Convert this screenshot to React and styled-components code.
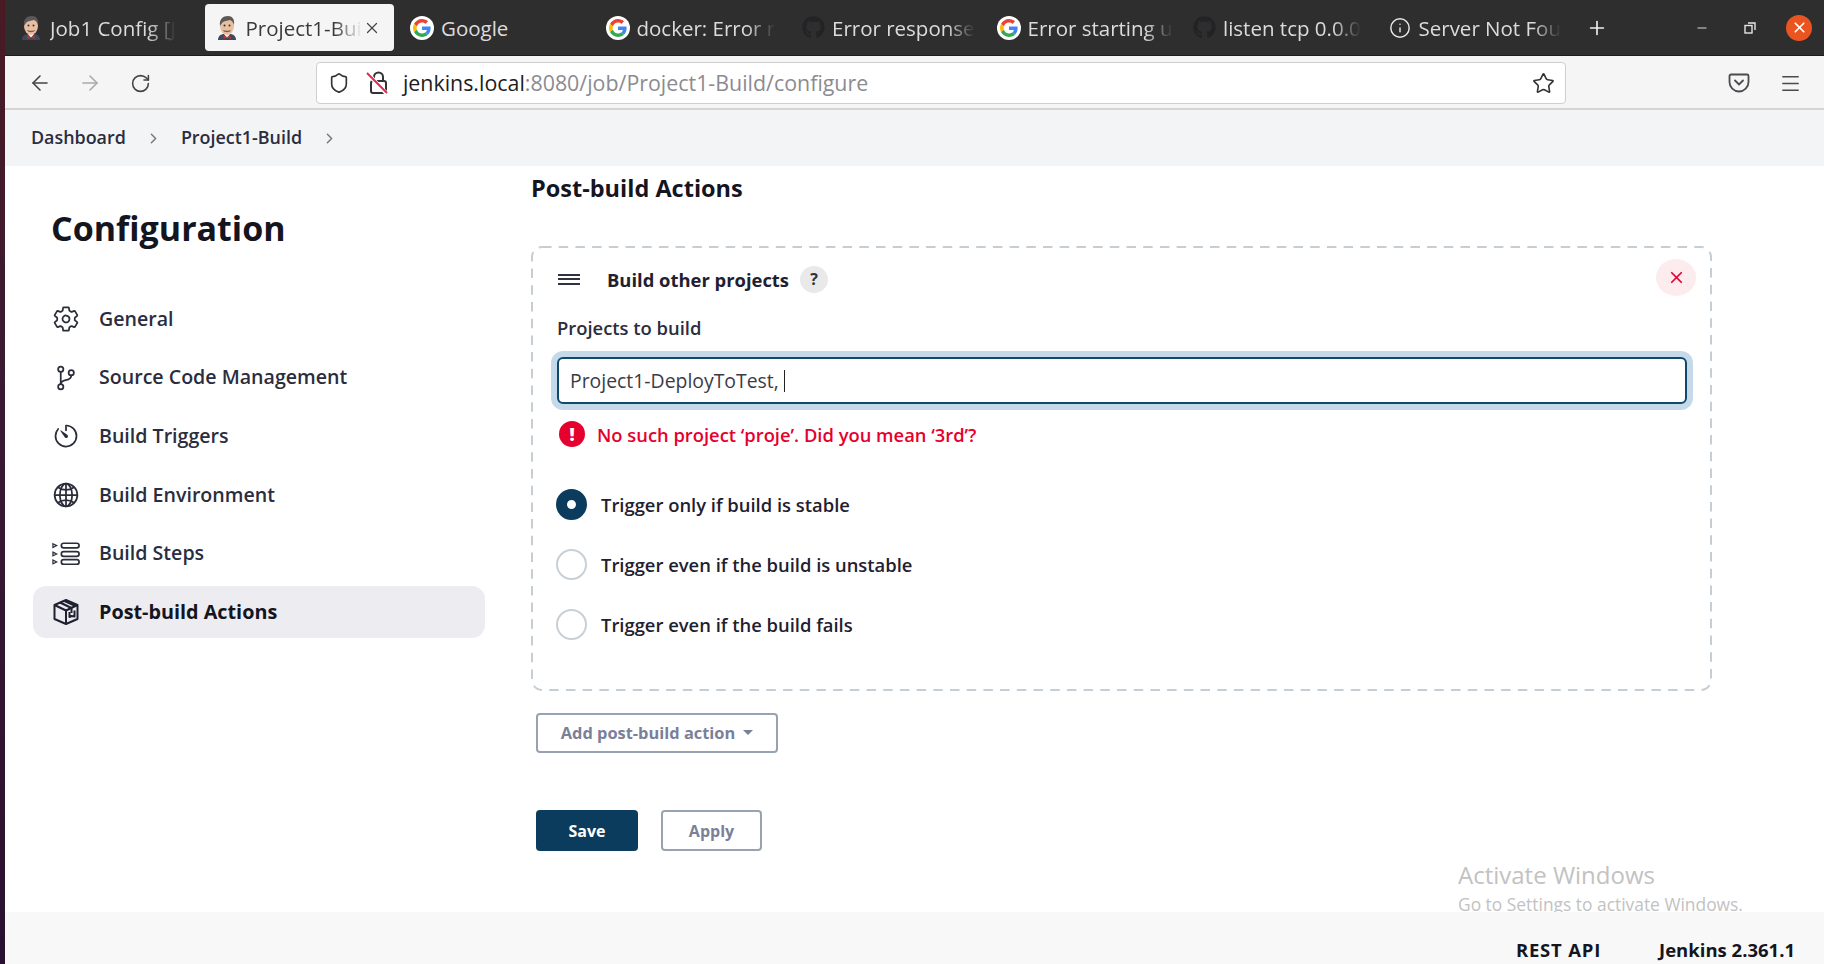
import styled, { createGlobalStyle } from "styled-components";
import { ArrowLeft, ArrowRight, RotateCw, Shield, Star, Plus, Menu, Minus, X, Info, ChevronRight } from "lucide-react";
import { IoSettingsOutline, IoGitBranchOutline, IoTimerOutline, IoGlobeOutline } from "react-icons/io5";
import { FaGithub } from "react-icons/fa";

const GlobalStyle = createGlobalStyle`
  html, body {
    margin: 0;
    padding: 0;
    background: #fff;
    overflow: hidden;
  }
  * {
    box-sizing: border-box;
  }
`;

const FONT = `"Open Sans", "Noto Sans", sans-serif`;

const JenkinsIcon = () => (
  <svg width="24" height="26" viewBox="0 0 24 26">
    <path d="M3 25c0-4 3-6 6-6h6c3 0 6 2 6 6z" fill="#3d4a5c" />
    <path d="M9 19h6l-3 4z" fill="#f4f4f4" />
    <path d="M8.5 20.5l3.5 1.5 3.5-1.5v3.5L12 22.6 8.500 24z" fill="#c8302b" />
    <ellipse cx="12" cy="11" rx="7" ry="9" fill="#e8bfa0" />
    <path d="M5 11C4 4 8 1 13 1c4 0 7 3 6 9-1-3-2-4-4-5-3 1-6 1-7 2-1 1-2 2-3 4z" fill="#5c5a58" />
    <path d="M8 15c2 1 6 1 8 0-1 3-7 3-8 0z" fill="#7a5a48" />
    <circle cx="9.500" cy="10.500" r="1" fill="#333" />
    <circle cx="14.500" cy="10.500" r="1" fill="#333" />
  </svg>
);

const GoogleIcon = () => (
  <svg width="24" height="24" viewBox="-8 -8 64 64">
    <circle cx="24" cy="24" r="32" fill="#fff" />
    <path fill="#EA4335" d="M24 9.500c3.540 0 6.710 1.220 9.210 3.600l6.850-6.850C35.900 2.380 30.470 0 24 0 14.620 0 6.510 5.380 2.560 13.220l7.980 6.190C12.430 13.720 17.740 9.500 24 9.500z" />
    <path fill="#4285F4" d="M46.980 24.550c0-1.570-.15-3.090-.38-4.550H24v9.020h12.940c-.58 2.960-2.260 5.480-4.780 7.180l7.730 6c4.510-4.180 7.090-10.360 7.090-17.650z" />
    <path fill="#FBBC05" d="M10.530 28.590c-.48-1.450-.76-2.990-.76-4.590s.27-3.140.76-4.590l-7.980-6.190C.92 16.460 0 20.120 0 24c0 3.880.92 7.540 2.560 10.780l7.970-6.190z" />
    <path fill="#34A853" d="M24 48c6.480 0 11.930-2.130 15.890-5.810l-7.730-6c-2.150 1.450-4.920 2.300-8.160 2.300-6.260 0-11.570-4.220-13.470-9.910l-7.980 6.190C6.510 42.620 14.620 48 24 48z" />
  </svg>
);

const LockOff = () => (
  <svg width="24" height="26" viewBox="0 0 24 26" fill="none">
    <path d="M8 11V7a4.500 4.500 0 0 1 9 0v4" stroke="#333" strokeWidth="2" />
    <rect x="5" y="11" width="15" height="12" rx="2" stroke="#333" strokeWidth="2" />
    <path d="M2 4l19 20" stroke="#fff" strokeWidth="4" />
    <path d="M1 3l20 20" stroke="#e22850" strokeWidth="2" />
  </svg>
);

const PocketIcon = () => (
  <svg width="22" height="22" viewBox="0 0 22 22" fill="none" stroke="#4a4a4f" strokeWidth="1.800">
    <path d="M3 2.500h16a1.500 1.500 0 0 1 1.500 1.500v6a9.500 9.500 0 0 1-19 0V4A1.500 1.500 0 0 1 3 2.500z" />
    <path d="M7 8.500l4 4 4-4" strokeLinecap="round" />
  </svg>
);

const RestoreIcon = () => (
  <svg width="12" height="12" viewBox="0 0 12 12" fill="none" stroke="#e6e6e6" strokeWidth="1.400">
    <rect x="1" y="3.500" width="7" height="7.500" />
    <path d="M4 1h7v7" />
  </svg>
);

const StepsIcon = () => (
  <svg width="30" height="26" viewBox="0 0 30 26" fill="none" stroke="#2b2d3a" strokeWidth="1.800">
    <rect x="10" y="1.500" width="19" height="5" rx="2.500" />
    <rect x="10" y="10.500" width="19" height="5" rx="2.500" />
    <rect x="10" y="19" width="19" height="5" rx="2.500" />
    <path d="M1 2l4 2-4 2zM1 11l4 2-4 2zM1 19.500l4 2-4 2z" strokeWidth="1.300" />
  </svg>
);

const PackageIcon = () => (
  <svg width="28" height="28" viewBox="0 0 28 28" fill="none" stroke="#1f2130" strokeWidth="2" strokeLinejoin="round">
    <path d="M14 2l11.500 5v14L14 26 2.500 21V7z" />
    <path d="M2.500 7L14 12.500 25.500 7M14 12.500V26" />
    <path d="M8 4.500l11.500 5.500v5M12.500 3l11 5" />
    <path d="M17.500 14v5l2-1 3 .5v-6" />
  </svg>
);

const tabs = [
  { icon: <JenkinsIcon />, title: "Job1 Config [J", fade: true },
  { icon: <JenkinsIcon />, title: "Project1-Bui", fade: true, active: true },
  { icon: <GoogleIcon />, title: "Google" },
  { icon: <GoogleIcon />, title: "docker: Error r", fade: true },
  { icon: <FaGithub size={23} color="#232326" />, title: "Error response", fade: true },
  { icon: <GoogleIcon />, title: "Error starting u", fade: true },
  { icon: <FaGithub size={23} color="#232326" />, title: "listen tcp 0.0.0", fade: true },
  { icon: <Info size={22} color="#e6e6e6" strokeWidth={1.6} />, title: "Server Not Fou", fade: true },
];

const sections = [
  { icon: <IoSettingsOutline size={30} />, label: "General" },
  { icon: <IoGitBranchOutline size={30} />, label: "Source Code Management" },
  { icon: <IoTimerOutline size={30} />, label: "Build Triggers" },
  { icon: <IoGlobeOutline size={30} />, label: "Build Environment" },
  { icon: <StepsIcon />, label: "Build Steps" },
  { icon: <PackageIcon />, label: "Post-build Actions", active: true },
];

const triggers = [
  { label: "Trigger only if build is stable", checked: true },
  { label: "Trigger even if the build is unstable" },
  { label: "Trigger even if the build fails" },
];

const App = () => {
  return (
    <Page>
      <GlobalStyle />
      <DesktopStrip />
      <Browser>
        <TabBar>
          <Tabs>
            {tabs.map((tab) => (
              <Tab key={tab.title} $active={tab.active}>
                <Favicon>{tab.icon}</Favicon>
                <TabTitle $active={tab.active} $fade={tab.fade}>{tab.title}</TabTitle>
                {tab.active && <TabClose size={18} color="#444" strokeWidth={1.6} />}
              </Tab>
            ))}
          </Tabs>
          <NewTab>
            <Plus size={22} color="#eee" strokeWidth={1.8} />
          </NewTab>
          <WindowControls>
            <MinimizeGlyph size={14} color="#e6e6e6" strokeWidth={1.6} />
            <RestoreIcon />
            <CloseWindow>
              <X size={17} color="#fff" strokeWidth={2.4} />
            </CloseWindow>
          </WindowControls>
        </TabBar>

        <Toolbar>
          <NavButton><ArrowLeft size={24} color="#444" strokeWidth={1.6} /></NavButton>
          <NavButton><ArrowRight size={24} color="#a9a9ad" strokeWidth={1.6} /></NavButton>
          <NavButton><RotateCw size={21} color="#444" strokeWidth={1.8} /></NavButton>
          <AddressBar>
            <Shield size={22} color="#333" strokeWidth={1.8} />
            <LockOff />
            <Url>
              <strong>jenkins.local</strong>:8080/job/Project1-Build/configure
            </Url>
            <Star size={23} color="#333" strokeWidth={1.7} />
          </AddressBar>
          <ToolbarEnd>
            <PocketIcon />
            <Menu size={23} color="#4a4a4f" strokeWidth={1.6} />
          </ToolbarEnd>
        </Toolbar>

        <Breadcrumbs>
          <Crumb>Dashboard</Crumb>
          <ChevronRight size={17} color="#777" strokeWidth={2} />
          <Crumb>Project1-Build</Crumb>
          <ChevronRight size={17} color="#777" strokeWidth={2} />
        </Breadcrumbs>

        <Main>
          <Sidebar>
            <SidebarTitle>Configuration</SidebarTitle>
            <SectionList>
              {sections.map((section) => (
                <SectionItem key={section.label} $active={section.active}>
                  <SectionIcon>{section.icon}</SectionIcon>
                  <SectionLabel>{section.label}</SectionLabel>
                </SectionItem>
              ))}
            </SectionList>
          </Sidebar>

          <Content>
            <SectionHeading>Post-build Actions</SectionHeading>
            <ActionBox>
              <DashedOutline>
                <rect x="1" y="1" width="1179" height="443" rx="10" />
              </DashedOutline>
              <ActionHeader>
                <HandleIcon>
                  <span />
                  <span />
                  <span />
                </HandleIcon>
                <ActionTitle>Build other projects</ActionTitle>
                <HelpBadge>?</HelpBadge>
                <DeleteButton>
                  <X size={19} color="#e6002e" strokeWidth={2.2} />
                </DeleteButton>
              </ActionHeader>
              <FieldLabel>Projects to build</FieldLabel>
              <TextField>
                Project1-DeployToTest,&nbsp;
                <Caret />
              </TextField>
              <ErrorRow>
                <ErrorDot>!</ErrorDot>
                No such project ‘proje’. Did you mean ‘3rd’?
              </ErrorRow>
              <RadioGroup>
                {triggers.map((trigger) => (
                  <RadioRow key={trigger.label}>
                    <RadioMark $checked={trigger.checked} />
                    {trigger.label}
                  </RadioRow>
                ))}
              </RadioGroup>
            </ActionBox>

            <AddButton>
              Add post-build action
              <DropCaret />
            </AddButton>

            <FormButtons>
              <SaveButton>Save</SaveButton>
              <ApplyButton>Apply</ApplyButton>
            </FormButtons>
          </Content>
        </Main>

        <Footer>
          <FooterLink $spacing="0.8px">REST API</FooterLink>
          <FooterLink>Jenkins 2.361.1</FooterLink>
        </Footer>
      </Browser>

      <Watermark>
        <WatermarkTitle>Activate Windows</WatermarkTitle>
        <WatermarkText>Go to Settings to activate Windows.</WatermarkText>
      </Watermark>
    </Page>
  );
};

export default App;

const Page = styled.div`
  position: relative;
  display: flex;
  width: 1824px;
  height: 964px;
  overflow: hidden;
  font-family: ${FONT};
  color: #1f2130;
`;

const DesktopStrip = styled.div`
  width: 5px;
  flex-shrink: 0;
  background: linear-gradient(180deg, #4a1a24 0%, #3a1a33 40%, #2a1030 100%);
`;

const Browser = styled.div`
  flex: 1;
  min-width: 0;
  display: flex;
  flex-direction: column;
`;

const TabBar = styled.div`
  height: 56px;
  flex-shrink: 0;
  display: flex;
  align-items: center;
  background: #2f2e2f;
  border-bottom: 1px solid #1c1c1c;
`;

const Tabs = styled.div`
  display: flex;
  gap: 6.500px;
  padding-left: 4px;
`;

const Tab = styled.div`
  width: 189px;
  height: 47px;
  padding-left: 10px;
  display: flex;
  align-items: center;
  gap: 7px;
  border-radius: 4px;
  background: ${(p) => (p.$active ? "#f5f5f6" : "transparent")};
`;

const Favicon = styled.div`
  width: 24px;
  height: 26px;
  flex-shrink: 0;
  display: flex;
  align-items: center;
  justify-content: center;
`;

const TabTitle = styled.div`
  white-space: nowrap;
  font-size: 20.500px;
  color: ${(p) => (p.$active ? "#3a3a3c" : "#dcdcdc")};
  mask-image: ${(p) => (p.$fade ? "linear-gradient(90deg, #000 calc(100% - 28px), transparent 100%)" : "none")};
`;

const TabClose = styled(X)`
  margin-left: -6px;
  flex-shrink: 0;
`;

const NewTab = styled.div`
  margin-left: 13px;
  width: 34px;
  display: flex;
  justify-content: center;
`;

const WindowControls = styled.div`
  margin-left: auto;
  padding-right: 12px;
  display: flex;
  align-items: center;
  gap: 30px;
`;

const MinimizeGlyph = styled(Minus)`
  margin-right: 5px;
`;

const CloseWindow = styled.div`
  width: 26px;
  height: 26px;
  border-radius: 50%;
  background: #e95420;
  display: flex;
  align-items: center;
  justify-content: center;
`;

const Toolbar = styled.div`
  height: 54px;
  flex-shrink: 0;
  display: flex;
  align-items: center;
  padding: 2px 0 0 10px;
  background: #f5f5f6;
  border-bottom: 2px solid #d4d4d6;
`;

const NavButton = styled.div`
  width: 50.300px;
  display: flex;
  justify-content: center;
`;

const AddressBar = styled.div`
  width: 1250px;
  height: 42px;
  margin-left: 150px;
  padding: 0 10px 0 11px;
  display: flex;
  align-items: center;
  gap: 16px;
  background: #fff;
  border: 1px solid #cfcfd1;
  border-radius: 4px;
`;

const Url = styled.div`
  flex: 1;
  margin-left: -3px;
  padding-bottom: 1px;
  font-size: 21.400px;
  color: #8b8b90;

  strong {
    font-weight: 400;
    color: #1c1c1e;
  }
`;

const ToolbarEnd = styled.div`
  display: flex;
  align-items: center;
  gap: 29px;
  margin-left: 162px;
`;

const Breadcrumbs = styled.div`
  height: 56px;
  flex-shrink: 0;
  display: flex;
  align-items: center;
  gap: 19px;
  padding-left: 26px;
  background: #f3f4f6;
`;

const Crumb = styled.div`
  padding-bottom: 2px;
  font-size: 17.900px;
  font-weight: 600;
  color: #2a2d3e;
`;

const Main = styled.div`
  flex: 1;
  min-height: 0;
  display: flex;
  background: #fff;
`;

const Sidebar = styled.div`
  width: 480px;
  flex-shrink: 0;
  padding: 42px 0 0 28px;
`;

const SidebarTitle = styled.h1`
  margin: 0 0 45px 18px;
  font-size: 34px;
  line-height: 40px;
  font-weight: 700;
  color: #14151f;
`;

const SectionList = styled.div`
  display: flex;
  flex-direction: column;
  gap: 6.700px;
`;

const SectionItem = styled.div`
  height: 52px;
  padding-left: 19px;
  display: flex;
  align-items: center;
  gap: 19px;
  border-radius: 13px;
  font-size: ${(p) => (p.$active ? "19.800px" : "19.600px")};
  font-weight: ${(p) => (p.$active ? 700 : 600)};
  color: ${(p) => (p.$active ? "#14151f" : "#2a2d3e")};
  background: ${(p) => (p.$active ? "#edecf1" : "transparent")};
`;

const SectionIcon = styled.div`
  width: 28px;
  height: 30px;
  display: flex;
  align-items: center;
  justify-content: center;
  color: #2b2d3a;
`;

const SectionLabel = styled.span`
  padding-bottom: 2px;
`;

const Content = styled.div`
  width: 1183px;
  margin-left: 46px;
  padding-top: 8px;
`;

const SectionHeading = styled.h2`
  margin: 0 0 42px;
  font-size: 23.500px;
  line-height: 28px;
  padding-bottom: 2px;
  font-weight: 700;
  color: #14151f;
`;

const ActionBox = styled.div`
  position: relative;
  width: 1181px;
  height: 445px;
  padding: 14px 25px 0 26px;
`;

const DashedOutline = styled.svg`
  position: absolute;
  inset: 0;
  width: 100%;
  height: 100%;
  pointer-events: none;

  rect {
    fill: none;
    stroke: #c5ced4;
    stroke-width: 2;
    stroke-dasharray: 9.500 7.200;
  }
`;

const ActionHeader = styled.div`
  height: 38px;
  display: flex;
  align-items: center;
`;

const HandleIcon = styled.div`
  width: 22px;
  margin-left: 1px;
  display: flex;
  flex-direction: column;
  gap: 2.500px;

  span {
    height: 2px;
    background: #30323f;
  }
`;

const ActionTitle = styled.div`
  margin-left: 27px;
  font-size: 18.400px;
  font-weight: 700;
  color: #1f2130;
`;

const HelpBadge = styled.div`
  width: 28px;
  height: 27px;
  margin-left: 11px;
  border-radius: 50%;
  background: #e9e9ea;
  display: flex;
  align-items: center;
  justify-content: center;
  font-size: 16px;
  font-weight: 700;
  color: #333;
`;

const DeleteButton = styled.div`
  width: 40px;
  height: 37px;
  margin-left: auto;
  margin-right: -9px;
  margin-top: -4px;
  border-radius: 50%;
  background: #fdecee;
  display: flex;
  align-items: center;
  justify-content: center;
`;

const FieldLabel = styled.div`
  margin: 18px 0 17px;
  font-size: 18.400px;
  line-height: 24px;
  font-weight: 600;
  color: #2a2d3e;
`;

const TextField = styled.div`
  height: 47px;
  padding-left: 11px;
  display: flex;
  align-items: center;
  font-size: 19.400px;
  color: #3a3c48;
  background: #fff;
  border: 2.500px solid #0f4a6e;
  border-radius: 6px;
  box-shadow: 0 0 0 6px #c4dae8;
`;

const Caret = styled.span`
  width: 1.500px;
  height: 22px;
  background: #222;
`;

const ErrorRow = styled.div`
  height: 26px;
  margin-top: 17px;
  padding-left: 2px;
  display: flex;
  align-items: center;
  gap: 12px;
  font-size: 18.350px;
  font-weight: 600;
  color: #e6002e;
`;

const ErrorDot = styled.div`
  width: 26px;
  height: 26px;
  border-radius: 50%;
  background: #e6002e;
  color: #fff;
  display: flex;
  align-items: center;
  justify-content: center;
  font-size: 18px;
  font-weight: 800;
`;

const RadioGroup = styled.div`
  margin: 42px 0 0 -1px;
  display: flex;
  flex-direction: column;
  gap: 29px;
`;

const RadioRow = styled.div`
  height: 31px;
  display: flex;
  align-items: center;
  gap: 14px;
  font-size: 18.400px;
  font-weight: 600;
  color: #1f2130;
`;

const RadioMark = styled.span`
  width: 31px;
  height: 31px;
  flex-shrink: 0;
  border-radius: 50%;
  background: #fff;
  border: ${(p) => (p.$checked ? "11.500px solid #0b3c5d" : "2.500px solid #c8d0d6")};
`;

const AddButton = styled.div`
  width: 242px;
  height: 40px;
  margin: 22px 0 0 5px;
  padding-bottom: 1px;
  display: flex;
  align-items: center;
  justify-content: center;
  gap: 8px;
  border: 2.500px solid #97a3b0;
  border-radius: 4px;
  font-size: 16.400px;
  font-weight: 700;
  color: #7a7f9a;
`;

const DropCaret = styled.span`
  width: 0;
  height: 0;
  border-left: 5px solid transparent;
  border-right: 5px solid transparent;
  border-top: 5px solid #7a7f9a;
`;

const FormButtons = styled.div`
  margin: 57px 0 0 5px;
  display: flex;
  gap: 23px;
`;

const SaveButton = styled.div`
  width: 102px;
  height: 41px;
  display: flex;
  align-items: center;
  justify-content: center;
  border-radius: 4px;
  background: #0b3c5d;
  color: #fff;
  font-size: 16px;
  font-weight: 700;
`;

const ApplyButton = styled(SaveButton)`
  width: 101px;
  background: #fff;
  color: #7a7f9a;
  border: 2.500px solid #97a3b0;
`;

const Footer = styled.div`
  position: relative;
  z-index: 1;
  height: 52px;
  flex-shrink: 0;
  padding: 27px 29px 0 0;
  display: flex;
  justify-content: flex-end;
  gap: 58px;
  background: #f8f8f8;
`;

const FooterLink = styled.div`
  font-size: 18.500px;
  line-height: 22px;
  font-weight: 700;
  letter-spacing: ${(p) => p.$spacing || "0"};
  color: #14151f;
`;

const Watermark = styled.div`
  position: absolute;
  left: 1458px;
  top: 860px;
  color: #c2c2c2;
  pointer-events: none;
`;

const WatermarkTitle = styled.div`
  font-size: 24px;
  line-height: 30px;
`;

const WatermarkText = styled.div`
  font-size: 17.400px;
  line-height: 29px;
`;
